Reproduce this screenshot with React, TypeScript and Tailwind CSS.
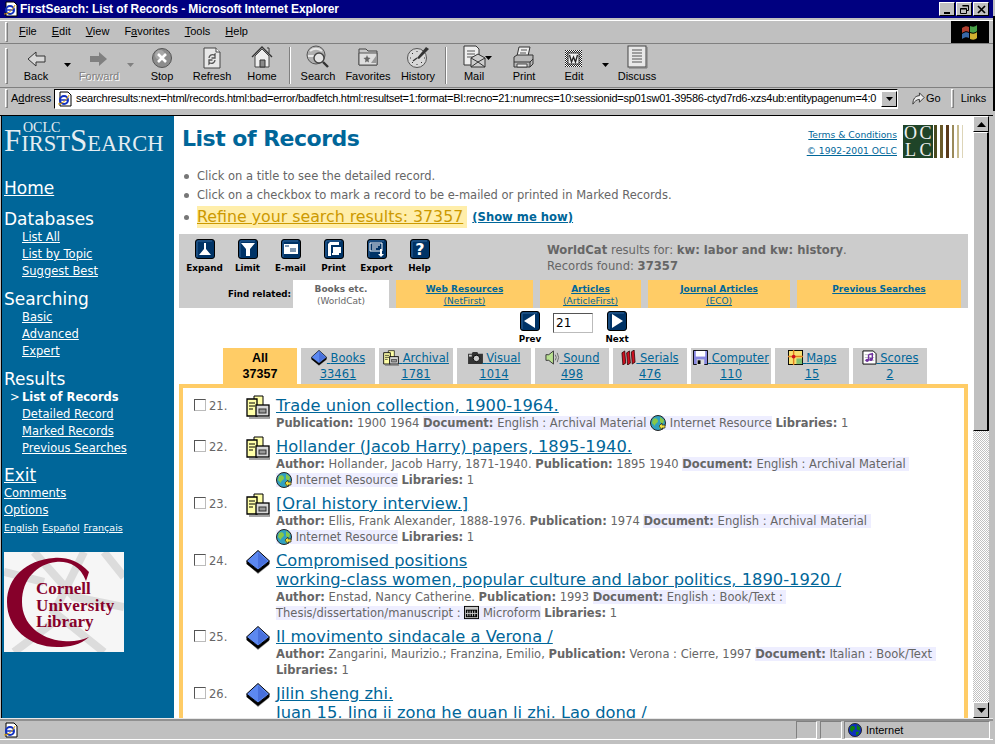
import type { ReactNode } from 'react';

const ui = "font-['Liberation_Sans',Arial,sans-serif]";
const page = "font-['DejaVu_Sans','Noto_Sans',sans-serif]";

// ---------- window chrome icons ----------
function IEPage({ className = '' }: { className?: string }) {
  return (
    <svg viewBox="0 0 16 16" width="16" height="16" className={className}>
      <path d="M3 1h8l3 3v11H3z" fill="#fff" stroke="#000" />
      <circle cx="7" cy="9" r="4" fill="none" stroke="#1030c0" strokeWidth="2" />
      <path d="M3 9h8" stroke="#1030c0" strokeWidth="1.5" />
      <path d="M1 13c4 0 9-4 11-9" fill="none" stroke="#e0a000" />
    </svg>
  );
}

function Grip({ h }: { h: number }) {
  return (
    <span
      className="block w-[3px] shrink-0 border-t border-l border-white border-r border-b border-r-[#808080] border-b-[#808080]"
      style={{ height: h }}
    />
  );
}

function Back() {
  return (
    <svg viewBox="0 0 20 20" width="20" height="20">
      <path d="M2 10l8-7v4h9v6h-9v4z" fill="#d8d8d8" stroke="#333" />
    </svg>
  );
}
function Forward() {
  return (
    <svg viewBox="0 0 20 20" width="20" height="20">
      <path d="M18 10l-8-7v4H1v6h9v4z" fill="#808080" />
    </svg>
  );
}
function Stop() {
  return (
    <svg viewBox="0 0 22 22" width="22" height="22">
      <circle cx="11" cy="11" r="9.5" fill="#8c8c8c" stroke="#555" />
      <circle cx="9" cy="8" r="5" fill="#a8a8a8" />
      <path d="M7 7l8 8M15 7l-8 8" stroke="#fff" strokeWidth="2.6" />
    </svg>
  );
}
function Refresh() {
  return (
    <svg viewBox="0 0 22 22" width="22" height="22">
      <path d="M3 1h12l4 4v16H3z" fill="#e8e8e8" stroke="#444" />
      <path d="M15 1v4h4" fill="#fff" stroke="#444" />
      <path d="M8 11a3.5 3.5 0 0 1 5-3l1-1v4h-3.5M14 13a3.5 3.5 0 0 1-5 3l-1 1v-4h3.5" fill="none" stroke="#555" strokeWidth="1.3" />
    </svg>
  );
}
function Home() {
  return (
    <svg viewBox="0 0 24 24" width="24" height="24">
      <path d="M2 12L12 2l10 10" fill="none" stroke="#333" strokeWidth="1.4" />
      <path d="M17 3h2v5" fill="#ddd" stroke="#333" />
      <path d="M5 11v11h14V11l-7-7z" fill="#eee" stroke="#444" />
      <path d="M10 15h5v7h-5z" fill="#8a8a8a" stroke="#333" />
    </svg>
  );
}
function SearchGlobe() {
  return (
    <svg viewBox="0 0 24 24" width="24" height="24">
      <circle cx="10" cy="10" r="9" fill="#b0b0b0" stroke="#555" />
      <path d="M4 6c4-3 8-3 12 0M2 11h6" stroke="#e8e8e8" strokeWidth="2" fill="none" />
      <circle cx="13" cy="13" r="5" fill="#e4e4e4" stroke="#444" strokeWidth="1.4" />
      <path d="M17 17l5 5" stroke="#333" strokeWidth="2.4" />
    </svg>
  );
}
function FavFolder() {
  return (
    <svg viewBox="0 0 24 24" width="24" height="24">
      <path d="M3 4h7l2 2h9v14H3z" fill="#c8c8c8" stroke="#444" />
      <path d="M3 8h18v12H3z" fill="#dedede" stroke="#555" />
      <path d="M11 10l1 2.5 2.5.5-2 1.8.5 2.7-2-1.3-2 1.3.5-2.7-2-1.8 2.5-.5z" fill="#666" />
      <path d="M15 18l5-7v7z" fill="#999" />
    </svg>
  );
}
function History() {
  return (
    <svg viewBox="0 0 24 24" width="24" height="24">
      <circle cx="11" cy="13" r="9.5" fill="#d8d8d8" stroke="#555" />
      <path d="M11 13l9-11 3 2-10 10z" fill="#333" />
      <path d="M11 6v1M4 13h1M18 13h1M11 19v1M6 8l1 1M6 18l1-1M16 18l-1-1" stroke="#333" />
      <path d="M11 13l-4 3" stroke="#333" strokeWidth="1.4" />
    </svg>
  );
}
function Mail() {
  return (
    <svg viewBox="0 0 24 24" width="24" height="24">
      <path d="M2 1h12l3 3v16H2z" fill="#eee" stroke="#333" />
      <path d="M5 6h8M5 9h8M5 12h6" stroke="#555" />
      <path d="M9 13l7-4 7 4v9H9z" fill="#ccc" stroke="#333" />
      <path d="M9 22l7-5 7 5M9 13l7 4 7-4" fill="none" stroke="#333" />
    </svg>
  );
}
function Printer() {
  return (
    <svg viewBox="0 0 24 24" width="24" height="24">
      <path d="M7 2h11l-2 9H5z" fill="#eee" stroke="#333" />
      <path d="M9 5h6M8 8h6" stroke="#555" />
      <path d="M2 12l3-2h16v9l-3 3H2z" fill="#b8b8b8" stroke="#333" />
      <path d="M2 17h16v5M18 17l3-3" fill="none" stroke="#333" />
      <path d="M5 19h10v3H5z" fill="#eee" stroke="#444" />
    </svg>
  );
}
function EditIcon() {
  return (
    <svg viewBox="0 0 20 20" width="20" height="20">
      <defs>
        <pattern id="chk" width="2" height="2" patternUnits="userSpaceOnUse">
          <rect width="2" height="2" fill="#fff" />
          <rect width="1" height="1" fill="#222" />
          <rect x="1" y="1" width="1" height="1" fill="#222" />
        </pattern>
      </defs>
      <rect x="1" y="1" width="17" height="17" fill="url(#chk)" />
      <rect x="4" y="4" width="11" height="11" fill="#eee" stroke="#333" />
      <path d="M5.5 6l2 7 2-5 2 5 2-7" fill="none" stroke="#222" strokeWidth="1.3" />
    </svg>
  );
}
function Discuss() {
  return (
    <svg viewBox="0 0 22 24" width="22" height="24">
      <rect x="2" y="1" width="18" height="21" fill="#e8e8e8" stroke="#444" />
      <path d="M6 5h10M6 8h10M6 11h10M6 14h10M6 17h10" stroke="#555" />
      <path d="M21 2v21H3" fill="none" stroke="#777" />
    </svg>
  );
}
function DropCaret({ color = '#000' }: { color?: string }) {
  return (
    <svg viewBox="0 0 7 4" width="7" height="4">
      <path d="M0 0h7L3.5 4z" fill={color} />
    </svg>
  );
}

function ToolButton({ icon, label, dim }: { icon: ReactNode; label: string; dim?: boolean }) {
  return (
    <div className="flex h-[43px] w-[50px] shrink-0 flex-col items-center">
      <div className="flex h-[25px] items-end justify-center">{icon}</div>
      <span className={`mt-[1px] text-[11px] leading-[13px] ${dim ? 'text-[#808080] [text-shadow:1px_1px_0_#fff]' : 'text-black'}`}>
        {label}
      </span>
    </div>
  );
}
function Drop({ dim }: { dim?: boolean }) {
  return (
    <div className="flex h-[43px] w-[13px] shrink-0 items-center justify-center pb-[2px]">
      <DropCaret color={dim ? '#808080' : '#000'} />
    </div>
  );
}
function ToolSep() {
  return (
    <div className="flex w-[6px] shrink-0 justify-center py-[3px]">
      <span className="h-[37px] w-[2px] border-r border-r-white bg-[#808080]" />
    </div>
  );
}

function CapButton({ children }: { children: ReactNode }) {
  return (
    <span className="flex h-[14px] w-[16px] items-center justify-center border border-t-white border-l-white border-r-black border-b-black bg-[#c0c0c0] text-black">
      {children}
    </span>
  );
}

function TitleBar() {
  return (
    <div className="flex h-[18px] shrink-0 items-center bg-[#000080] pr-[4px] pl-[3px]">
      <IEPage />
      <span className="ml-[1px] flex-1 text-[12px] font-bold tracking-[-0.1px] text-white">
        FirstSearch: List of Records - Microsoft Internet Explorer
      </span>
      <div className="flex items-center gap-[1px]">
        <CapButton>
          <svg viewBox="0 0 9 9" width="9" height="9"><path d="M1 7h6v2H1z" /></svg>
        </CapButton>
        <CapButton>
          <svg viewBox="0 0 9 9" width="9" height="9"><path d="M2.5.5h6v5h-2M.5 3.5h6v5h-6zM.5 4h6M2.5 1h6" fill="none" stroke="#000" /></svg>
        </CapButton>
        <CapButton>
          <svg viewBox="0 0 9 9" width="9" height="9"><path d="M1 1l7 7M8 1l-7 7" stroke="#000" strokeWidth="1.7" /></svg>
        </CapButton>
      </div>
    </div>
  );
}

function MenuBar() {
  const items: [string, string, string][] = [
    ['', 'F', 'ile'],
    ['', 'E', 'dit'],
    ['', 'V', 'iew'],
    ['F', 'a', 'vorites'],
    ['', 'T', 'ools'],
    ['', 'H', 'elp'],
  ];
  return (
    <div className="flex h-[24px] shrink-0 items-center border-t border-b border-t-white border-b-[#808080] pr-[4px] pl-[5px]">
      <Grip h={20} />
      <div className="ml-[11px] flex flex-1 gap-[15px] pb-[2px] text-[11px] text-black">
        {items.map(([a, b, c]) => (
          <span key={b + c}>
            {a}
            <span className="underline">{b}</span>
            {c}
          </span>
        ))}
      </div>
      <div className="flex h-[22px] w-[38px] items-center justify-center bg-black">
        <svg viewBox="0 0 18 18" width="18" height="18">
          <path d="M1 5c3-2 5-2 7-1v5c-2-1-4-1-7 1z" fill="#b04030" />
          <path d="M1 11c3-2 5-2 7-1v5c-2-1-4-1-7 1z" fill="#3868a8" />
          <path d="M9 3c3 1 5 1 7-1v6c-2 2-4 2-7 1z" fill="#48a048" />
          <path d="M9 10c3 1 5 1 7-1v6c-2 2-4 2-7 1z" fill="#d0b030" />
        </svg>
      </div>
    </div>
  );
}

function Toolbar() {
  return (
    <div className="flex h-[44px] shrink-0 items-center border-b border-b-[#808080] pl-[5px]">
      <Grip h={36} />
      <div className="ml-[3px] flex items-start">
        <ToolButton icon={<Back />} label="Back" />
        <Drop />
        <ToolButton icon={<Forward />} label="Forward" dim />
        <Drop dim />
        <ToolButton icon={<Stop />} label="Stop" />
        <ToolButton icon={<Refresh />} label="Refresh" />
        <ToolButton icon={<Home />} label="Home" />
        <ToolSep />
        <ToolButton icon={<SearchGlobe />} label="Search" />
        <ToolButton icon={<FavFolder />} label="Favorites" />
        <ToolButton icon={<History />} label="History" />
        <ToolSep />
        <div className="relative">
          <ToolButton icon={<Mail />} label="Mail" />
          <span className="absolute top-[12px] left-[36px] flex">
            <DropCaret />
          </span>
        </div>
        <ToolButton icon={<Printer />} label="Print" />
        <ToolButton icon={<EditIcon />} label="Edit" />
        <Drop />
        <ToolButton icon={<Discuss />} label="Discuss" />
      </div>
    </div>
  );
}

function AddressBar() {
  return (
    <div className="flex h-[21px] shrink-0 items-center pl-[5px] text-[11px] text-black">
      <Grip h={19} />
      <span className="ml-[3px] w-[43px]">
        A<span className="underline">d</span>dress
      </span>
      <div className="flex h-[20px] w-[844px] items-center border border-t-black border-l-black border-r-white border-b-white bg-white">
        <IEPage className="ml-[2px] shrink-0" />
        <span className="ml-[3px] flex-1 overflow-hidden tracking-[-0.26px] whitespace-nowrap">
          searchresults:next=html/records.html:bad=error/badfetch.html:resultset=1:format=BI:recno=21:numrecs=10:sessionid=sp01sw01-39586-ctyd7rd6-xzs4ub:entitypagenum=4:0
        </span>
        <span className="flex h-[16px] w-[16px] shrink-0 items-center justify-center border border-t-white border-l-white border-r-black border-b-black bg-[#c0c0c0]">
          <DropCaret />
        </span>
      </div>
      <svg viewBox="0 0 16 16" width="15" height="15" className="ml-[13px]">
        <path d="M2 14c0-6 3-9 7-9V2l5 5-5 5V9c-3 0-5 2-7 5z" fill="#eee" stroke="#333" />
      </svg>
      <span>Go</span>
      <span className="ml-[10px] flex">
        <Grip h={19} />
      </span>
      <span className="ml-[7px]">Links</span>
    </div>
  );
}

function StatusBar() {
  return (
    <div className="shrink-0">
      <div className="h-[1px] bg-[#e8e8e8]" />
      <div className="h-[2px] bg-[#909090]" />
      <div className="flex h-[19px] items-stretch border-b border-b-white pl-[2px] text-[11px] text-black">
        <div className="flex w-[791px] items-center">
          <IEPage className="ml-[1px]" />
        </div>
        <div className="ml-[3px] w-[21px] border border-t-[#808080] border-l-[#808080] border-r-white border-b-white" />
        <div className="ml-[3px] w-[22px] border border-t-[#808080] border-l-[#808080] border-r-white border-b-white" />
        <div className="ml-[2px] flex w-[146px] items-center border border-t-[#808080] border-l-[#808080] border-r-white border-b-white pl-[3px]">
          <SmallGlobe size={14} plain />
          <span className="ml-[4px]">Internet</span>
        </div>
      </div>
    </div>
  );
}

function ScrollBar() {
  return (
    <div className="flex w-[16px] shrink-0 flex-col bg-[#c0c0c0]">
      <ScrollButton up />
      <div className="h-[299px] shrink-0 border border-t-white border-l-white border-r-2 border-r-black border-b-black bg-[#c0c0c0]" />
      <div className="flex-1 bg-[repeating-conic-gradient(#fff_0%_25%,#c0c0c0_0%_50%)] bg-[length:2px_2px]" />
      <ScrollButton />
    </div>
  );
}
function ScrollButton({ up }: { up?: boolean }) {
  return (
    <div className="flex h-[16px] shrink-0 items-center justify-center border border-t-white border-l-white border-r-black border-b-black bg-[#c0c0c0]">
      <svg viewBox="0 0 9 5" width="9" height="5">
        <path d={up ? 'M4.5 0L9 5H0z' : 'M0 0h9L4.5 5z'} />
      </svg>
    </div>
  );
}

// ---------- sidebar ----------
function FirstSearchLogo() {
  return (
    <div className="relative h-[41px] font-['Liberation_Serif',serif] leading-none text-[#e4edf2]">
      <div className="absolute top-[5px] left-[19px] text-[14px]">OCLC</div>
      <div className="absolute top-[9px] left-0 text-[22.5px] whitespace-nowrap">
        <span className="text-[31px]">F</span>IRST<span className="text-[31px]">S</span>EARCH
      </div>
    </div>
  );
}

function NavHead({ children, link }: { children: ReactNode; link?: boolean }) {
  return <div className={`text-[17px] leading-[20px] ${link ? 'underline' : ''}`}>{children}</div>;
}
function NavLink({ children, bold }: { children: ReactNode; bold?: boolean }) {
  return (
    <div className="relative pl-[18px] text-[11.5px] leading-[17px]">
      {bold ? (
        <>
          <span className="absolute left-[6px]">&gt;</span>
          <b>{children}</b>
        </>
      ) : (
        <span className="underline">{children}</span>
      )}
    </div>
  );
}

function CornellLogo() {
  return (
    <svg viewBox="0 0 120 100" width="120" height="100" className="mt-[16px] block">
      <rect width="120" height="100" fill="#f6f6f6" />
      <path d="M30 0l40 45 50 10M80 0L50 60l50 40M0 20l40 10M10 100l40-30M100 0l20 25" stroke="#dcdcdc" strokeWidth="8" fill="none" />
      <path d="M85 20C75 9 62 5 50 6 22 8 3 26 3 50c0 26 22 45 50 45 13 0 23-2 32-10-9 4-17 5-26 4C36 87 18 72 18 50 18 27 33 12 52 10c12-1 24 3 30 19z" fill="#86002a" />
      <g fill="#86002a" fontFamily="'Liberation Serif', serif" fontWeight="bold" fontSize="17">
        <text x="32" y="42">Cornell</text>
        <text x="32" y="58.500" letterSpacing="0.3">University</text>
        <text x="32" y="75">Library</text>
      </g>
    </svg>
  );
}

function Sidebar() {
  return (
    <aside className={`h-full w-[172px] shrink-0 overflow-hidden bg-[#006699] pl-[2px] text-white ${page}`}>
      <FirstSearchLogo />
      <div className="mt-[21px]">
        <NavHead link>Home</NavHead>
      </div>
      <div className="mt-[11px]">
        <NavHead>Databases</NavHead>
        <NavLink>List All</NavLink>
        <NavLink>List by Topic</NavLink>
        <NavLink>Suggest Best</NavLink>
      </div>
      <div className="mt-[9px]">
        <NavHead>Searching</NavHead>
        <NavLink>Basic</NavLink>
        <NavLink>Advanced</NavLink>
        <NavLink>Expert</NavLink>
      </div>
      <div className="mt-[9px]">
        <NavHead>Results</NavHead>
        <NavLink bold>List of Records</NavLink>
        <NavLink>Detailed Record</NavLink>
        <NavLink>Marked Records</NavLink>
        <NavLink>Previous Searches</NavLink>
      </div>
      <div className="mt-[8px]">
        <NavHead link>Exit</NavHead>
      </div>
      <div className="text-[11.5px] leading-[17px] underline">Comments</div>
      <div className="text-[11.5px] leading-[17px] underline">Options</div>
      <div className="flex gap-[4px] text-[9.5px] leading-[17px] underline">
        <span>English</span>
        <span>Español</span>
        <span>Français</span>
      </div>
      <CornellLogo />
    </aside>
  );
}

// ---------- page icons ----------
function NavyButton({ children }: { children: ReactNode }) {
  return (
    <svg viewBox="0 0 20 20" width="20" height="20" className="block">
      <rect x="0.5" y="0.5" width="19" height="19" rx="2.5" fill="#003366" stroke="#000" />
      <path d="M2 18V3q0-1 1-1h14" fill="none" stroke="#336699" />
      {children}
    </svg>
  );
}
const navyGlyphs: Record<string, ReactNode> = {
  Expand: <path d="M9 4h2v6l5 6H4l5-6z" fill="#fff" />,
  Limit: <path d="M3 4h14l-5 6v7H8v-7z" fill="#fff" />,
  'E-mail': (
    <>
      <rect x="3" y="5" width="14" height="10" fill="#fff" />
      <path d="M4 7h4M9 10h6M9 12h6" stroke="#003366" />
    </>
  ),
  Print: (
    <>
      <path d="M4 17V5l2-2h9v3H7v11z" fill="#fff" />
      <path d="M9 8h8v6H9z" fill="#fff" />
      <path d="M8 14h7v2H8z" fill="#fff" />
    </>
  ),
  Export: (
    <>
      <path d="M3 4h12v8H3z" fill="none" stroke="#fff" />
      <path d="M5 6h8M5 8h6M5 10h4" stroke="#fff" />
      <path d="M13 10v5h-2l3 3 3-3h-2v-5z" fill="#fff" />
    </>
  ),
  Help: (
    <text x="10" y="16" textAnchor="middle" fontSize="16" fontWeight="bold" fill="#fff" fontFamily="'DejaVu Sans', sans-serif">
      ?
    </text>
  ),
  Prev: <path d="M4 10l11-7v14z" fill="#fff" />,
  Next: <path d="M16 10L5 3v14z" fill="#fff" />,
};

function SmallBook({ size = 16 }: { size?: number }) {
  return (
    <svg viewBox="0 0 24 24" width={size} height={size} className={size > 20 ? 'block' : 'inline-block align-[-4px]'}>
      <path d="M2 15l10 9 11-9-1-1-10 8-9-8z" fill="#999" />
      <path d="M0.5 11v3l11.5 9 11.5-9v-3l-11.5 9z" fill="#000" />
      <path d="M0.5 11L12 0.5 23.5 11 12 20z" fill="#5c88f0" stroke="#000" />
      <path d="M12 2.5l9.5 8.5-9.5 7.5z" fill="#4870dc" />
    </svg>
  );
}
function Archive({ size = 16 }: { size?: number }) {
  return (
    <svg viewBox="0 0 24 24" width={size} height={size} className={size > 20 ? 'block' : 'inline-block align-[-4px]'}>
      <path d="M8 1h9v16H8z" fill="#ffffa8" stroke="#000" />
      <path d="M1 4h10v17H1z" fill="#ffffa8" stroke="#000" strokeWidth="1.3" />
      <path d="M3 8h6M3 11h6M3 14h4" stroke="#000" />
      <rect x="10" y="10" width="13" height="11" fill="#d8d8d8" stroke="#000" strokeWidth="1.3" />
      <rect x="13" y="14" width="7" height="4" fill="#999" stroke="#333" />
      <path d="M3 23h21v-2" fill="none" stroke="#888" strokeWidth="1.5" />
    </svg>
  );
}
function SmallGlobe({ size = 16, plain }: { size?: number; plain?: boolean }) {
  return (
    <svg viewBox="0 0 16 16" width={size} height={size} className="inline-block align-[-4px]">
      <circle cx="8" cy="8" r="7.5" fill={plain ? '#1030c0' : '#30a0c0'} stroke="#222" />
      <path d="M3 4c3-2 5 0 5 2s-3 2-3 5L2 8zM10 2l4 3-1 4-3-2zM9 10l4 0-2 4-2-1z" fill={plain ? '#108010' : '#88c848'} />
      {!plain && <path d="M9 11l3-3v2h3v3h-3v2z" fill="#f0e040" stroke="#222" strokeWidth="0.7" />}
    </svg>
  );
}
function Microform() {
  return (
    <svg viewBox="0 0 16 16" width="15" height="15" className="inline-block align-[-3px]">
      <rect x="0.5" y="1.5" width="15" height="13" fill="#c8c8c8" stroke="#000" />
      <path d="M2 5h12v8H2z" fill="#000" />
      <path d="M4 6v6M6.5 6v6M9 6v6M11.5 6v6M2 9h12" stroke="#ccc" />
    </svg>
  );
}
const tabIcons: Record<string, ReactNode> = {
  Books: <SmallBook />,
  Archival: <Archive />,
  Visual: (
    <svg viewBox="0 0 16 14" width="15" height="13" className="inline-block align-[-2px]">
      <path d="M0 3h4l1-2h5l1 2h5v11H0z" fill="#333" />
      <circle cx="9" cy="8" r="3.5" fill="#ccc" stroke="#000" />
      <rect x="1" y="4" width="3" height="2" fill="#ccc" />
    </svg>
  ),
  Sound: (
    <svg viewBox="0 0 16 16" width="15" height="15" className="inline-block align-[-3px]">
      <path d="M1 5h3l5-4v14l-5-4H1z" fill="#b8e090" stroke="#333" />
      <path d="M11 5q2 3 0 6M13 3q3 5 0 10" stroke="#666" fill="none" />
    </svg>
  ),
  Serials: (
    <svg viewBox="0 0 16 16" width="15" height="15" className="inline-block align-[-3px]">
      <path d="M1 3l3-2 1 13-3 2zM6 3l3-2 1 13-3 2zM11 2l3-2 1 13-3 2z" fill="#d01020" stroke="#200" strokeWidth="0.8" />
    </svg>
  ),
  Computer: (
    <svg viewBox="0 0 16 16" width="15" height="15" className="inline-block align-[-3px]">
      <path d="M0.5 0.5h15v15h-15z" fill="#8888e0" stroke="#000" />
      <rect x="3" y="1" width="10" height="6" fill="#fff" />
      <rect x="4" y="10" width="8" height="6" fill="#ddd" />
      <rect x="5" y="11" width="3" height="4" fill="#000" />
    </svg>
  ),
  Maps: (
    <svg viewBox="0 0 16 16" width="15" height="15" className="inline-block align-[-3px]">
      <rect x="0.5" y="0.5" width="15" height="15" fill="#f8e070" stroke="#000" />
      <path d="M9 9h6v6H9z" fill="#80c070" />
      <path d="M0 7h16M6 0v16" stroke="#e08020" strokeWidth="1.5" />
      <circle cx="6" cy="7" r="2" fill="#d01020" />
    </svg>
  ),
  Scores: (
    <svg viewBox="0 0 16 16" width="15" height="15" className="inline-block align-[-3px]">
      <path d="M1 1h11l3 3v11H1z" fill="#fff" stroke="#000" />
      <path d="M3 5h10M3 8h10M3 11h10" stroke="#bbb" />
      <path d="M7 5l4-1v6M7 5v6" stroke="#7030a0" strokeWidth="1.5" fill="none" />
      <circle cx="5.5" cy="11" r="1.8" fill="#7030a0" />
      <circle cx="9.5" cy="10" r="1.8" fill="#7030a0" />
    </svg>
  ),
};

// ---------- page content ----------
function OclcMark() {
  return (
    <div className="flex h-[33px] w-[60px] font-['Liberation_Serif',serif]">
      <div className="grid w-[31px] grid-cols-2 bg-[#1f4428] text-center text-[18px] leading-[16px] text-[#eee]">
        <span>O</span>
        <span>C</span>
        <span>L</span>
        <span>C</span>
      </div>
      <div className="flex flex-1 gap-[3px] pl-[1px]">
        <span className="w-[3px] bg-[#4a4a1e]" />
        <span className="w-[3px] bg-[#6a5a2a]" />
        <span className="w-[3px] bg-[#5a3a1a]" />
        <span className="w-[2px] bg-[#9a8a5a]" />
        <span className="w-[2px] bg-[#c8bc90]" />
        <span className="w-[1px] bg-[#ddd5b8]" />
      </div>
    </div>
  );
}

function Header() {
  return (
    <div className="flex h-[50px] shrink-0 justify-between pr-[10px]">
      <h1 className="pt-[9px] pl-[8px] text-[22px] leading-[28px] font-bold tracking-[-0.5px] text-[#006699]">List of Records</h1>
      <div className="flex pt-[9px]">
        <div className="pt-[2px] text-right text-[9.2px] leading-[16px] text-[#006699] underline">
          <div>Terms &amp; Conditions</div>
          <div>© 1992-2001 OCLC</div>
        </div>
        <div className="ml-[6px]">
          <OclcMark />
        </div>
      </div>
    </div>
  );
}

function Bullets() {
  return (
    <ul className="h-[68px] shrink-0 pt-[1px] pl-[10px] text-[11.5px] leading-[19px] text-[#666666]">
      <li className="flex items-center">
        <span className="mr-[8px] h-[5px] w-[5px] rounded-full bg-[#777]" />
        Click on a title to see the detailed record.
      </li>
      <li className="flex items-center">
        <span className="mr-[8px] h-[5px] w-[5px] rounded-full bg-[#777]" />
        Click on a checkbox to mark a record to be e-mailed or printed in Marked Records.
      </li>
      <li className="mt-[1px] flex items-center leading-[22px]">
        <span className="mr-[8px] h-[5px] w-[5px] rounded-full bg-[#777]" />
        <span className="bg-[#ffeeaa] pr-[4px] text-[15.8px] text-[#cc9900] underline">Refine your search results: 37357</span>
        <span className="ml-[5px] text-[11.6px] font-bold text-[#006699] underline">(Show me how)</span>
      </li>
    </ul>
  );
}

const actions = ['Expand', 'Limit', 'E-mail', 'Print', 'Export', 'Help'];
const related = [
  { w: 137, top: 'Web Resources', sub: '(NetFirst)' },
  { w: 101, top: 'Articles', sub: '(ArticleFirst)' },
  { w: 142, top: 'Journal Articles', sub: '(ECO)' },
  { w: 164, top: 'Previous Searches', sub: '' },
];

function ActionPanel() {
  return (
    <div className="mr-[5px] ml-[5px] shrink-0 bg-[#cccccc]">
      <div className="flex h-[46px]">
        <div className="flex w-[368px] pt-[5px] pl-[4px]">
          {actions.map((a) => (
            <div key={a} className="flex w-[43px] flex-col items-center">
              <NavyButton>{navyGlyphs[a]}</NavyButton>
              <span className="mt-[3px] text-[8.8px] leading-[12px] font-bold text-black">{a}</span>
            </div>
          ))}
        </div>
        <div className="pt-[8px] text-[11.6px] leading-[16px] text-[#666666]">
          <div>
            <b>WorldCat</b> results for: <b>kw: labor and kw: history</b>.
          </div>
          <div>
            Records found: <b>37357</b>
          </div>
        </div>
      </div>
      <div className="flex h-[28px] text-[9px] leading-[12px]">
        <div className="flex w-[112px] items-center justify-end text-[8.7px] font-bold text-black">Find related:</div>
        <div className="ml-[2px] w-[96px] bg-white pt-[3px] text-center text-[#666666]">
          <div className="font-bold">Books etc.</div>
          <div>(WorldCat)</div>
        </div>
        {related.map((r) => (
          <div key={r.top} className="ml-[7px] bg-[#ffcc66] pt-[3px] text-center text-[#006699]" style={{ width: r.w }}>
            <div className="font-bold underline">{r.top}</div>
            <div className="underline">{r.sub}</div>
          </div>
        ))}
      </div>
    </div>
  );
}

function Pager() {
  return (
    <div className="flex h-[40px] shrink-0 pl-[336px]">
      <div className="flex w-[40px] flex-col items-center pt-[3px]">
        <NavyButton>{navyGlyphs.Prev}</NavyButton>
        <span className="mt-[2px] text-[8.8px] leading-[12px] font-bold text-black">Prev</span>
      </div>
      <div className="ml-[3px] pt-[5px]">
        <div className="flex h-[20px] w-[40px] items-center border border-t-[#555] border-l-[#555] border-r-[#bbb] border-b-[#bbb] pl-[2px] text-[12px] text-black">
          21
        </div>
      </div>
      <div className="ml-[4px] flex w-[40px] flex-col items-center pt-[3px]">
        <NavyButton>{navyGlyphs.Next}</NavyButton>
        <span className="mt-[2px] text-[8.8px] leading-[12px] font-bold text-black">Next</span>
      </div>
    </div>
  );
}

const formats = [
  { name: 'Books', n: '33461', w: 74 },
  { name: 'Archival', n: '1781', w: 74 },
  { name: 'Visual', n: '1014', w: 74 },
  { name: 'Sound', n: '498', w: 74 },
  { name: 'Serials', n: '476', w: 74 },
  { name: 'Computer', n: '110', w: 80 },
  { name: 'Maps', n: '15', w: 74 },
  { name: 'Scores', n: '2', w: 74 },
];

function FormatTabs() {
  return (
    <div className="flex h-[36px] shrink-0 gap-[4px] pl-[49px] text-[11.5px] leading-[16px]">
      <div className={`w-[74px] bg-[#ffcc66] pt-[2px] text-center text-[12.5px] font-bold text-black ${ui}`}>
        <div>All</div>
        <div>37357</div>
      </div>
      {formats.map((f) => (
        <div key={f.name} className="bg-[#cccccc] pt-[2px] text-center whitespace-nowrap text-[#006699]" style={{ width: f.w }}>
          <div className="h-[16px] underline">
            {tabIcons[f.name]} {f.name}
          </div>
          <div className="underline">{f.n}</div>
        </div>
      ))}
    </div>
  );
}

function L({ label, children }: { label: string; children?: ReactNode }) {
  return (
    <>
      <b>{label}</b> {children}{' '}
    </>
  );
}
function Doc({ children }: { children: ReactNode }) {
  return <span className="bg-[#eeeeff]">{children}</span>;
}
function Net() {
  return (
    <Doc>
      <SmallGlobe /> Internet Resource
    </Doc>
  );
}

type Rec = { no: number; icon: 'arch' | 'book'; title: string[]; lines: ReactNode[] };

const records: Rec[] = [
  {
    no: 21,
    icon: 'arch',
    title: ['Trade union collection, 1900-1964.'],
    lines: [
      <>
        <L label="Publication:">1900 1964</L>
        <Doc>
          <b>Document:</b> English : Archival Material <SmallGlobe /> Internet Resource
        </Doc>{' '}
        <L label="Libraries:">1</L>
      </>,
    ],
  },
  {
    no: 22,
    icon: 'arch',
    title: ['Hollander (Jacob Harry) papers, 1895-1940.'],
    lines: [
      <>
        <L label="Author:">Hollander, Jacob Harry, 1871-1940.</L>
        <L label="Publication:">1895 1940</L>
        <Doc>
          <b>Document:</b> English : Archival Material&nbsp;
        </Doc>
      </>,
      <>
        <Net /> <L label="Libraries:">1</L>
      </>,
    ],
  },
  {
    no: 23,
    icon: 'arch',
    title: ['[Oral history interview.]'],
    lines: [
      <>
        <L label="Author:">Ellis, Frank Alexander, 1888-1976.</L>
        <L label="Publication:">1974</L>
        <Doc>
          <b>Document:</b> English : Archival Material&nbsp;
        </Doc>
      </>,
      <>
        <Net /> <L label="Libraries:">1</L>
      </>,
    ],
  },
  {
    no: 24,
    icon: 'book',
    title: ['Compromised positions', 'working-class women, popular culture and labor politics, 1890-1920 /'],
    lines: [
      <>
        <L label="Author:">Enstad, Nancy Catherine.</L>
        <L label="Publication:">1993</L>
        <Doc>
          <b>Document:</b> English : Book/Text :&nbsp;
        </Doc>
      </>,
      <>
        <Doc>
          Thesis/dissertation/manuscript : <Microform /> Microform
        </Doc>{' '}
        <L label="Libraries:">1</L>
      </>,
    ],
  },
  {
    no: 25,
    icon: 'book',
    title: ['Il movimento sindacale a Verona /'],
    lines: [
      <>
        <L label="Author:">Zangarini, Maurizio.; Franzina, Emilio,</L>
        <L label="Publication:">Verona : Cierre, 1997</L>
        <Doc>
          <b>Document:</b> Italian : Book/Text&nbsp;
        </Doc>
      </>,
      <L label="Libraries:">1</L>,
    ],
  },
  {
    no: 26,
    icon: 'book',
    title: ['Jilin sheng zhi.', 'Juan 15, Jing ji zong he guan li zhi, Lao dong /'],
    lines: [],
  },
];

function Record({ r }: { r: Rec }) {
  return (
    <div className="flex">
      <div className="flex w-[52px] shrink-0 items-start pt-[3px] text-[11.5px] leading-[14px] text-[#666666]">
        <span className="h-[12px] w-[12px] border border-t-[#555] border-l-[#555] border-r-[#bbb] border-b-[#bbb] bg-white" />
        <span className="ml-[3px]">{r.no}.</span>
      </div>
      <div className="-mt-[1px] w-[30px] shrink-0">{r.icon === 'arch' ? <Archive size={24} /> : <SmallBook size={24} />}</div>
      <div className="whitespace-nowrap">
        {r.title.map((t) => (
          <div key={t} className="text-[16.3px] leading-[19px] text-[#006699] underline">
            {t}
          </div>
        ))}
        {r.lines.map((line, i) => (
          <div key={i} className="h-[16px] text-[11.5px] leading-[16px] text-[#666666] [&_b]:font-bold">
            {line}
          </div>
        ))}
      </div>
    </div>
  );
}

function ResultsBox() {
  return (
    <div className="mr-[5px] ml-[5px] flex-1 border-4 border-b-0 border-[#ffcc66] pt-[8px] pl-[11px]">
      <div className="flex flex-col gap-[6px]">
        {records.map((r) => (
          <Record key={r.no} r={r} />
        ))}
      </div>
    </div>
  );
}

export default function App() {
  return (
    <div className={`flex h-[744px] w-[995px] overflow-hidden bg-[#c0c0c0] ${ui}`}>
      <div className="flex h-[740px] w-[993px] shrink-0 flex-col">
        <TitleBar />
        <div className="h-[2px] shrink-0" />
        <MenuBar />
        <Toolbar />
        <AddressBar />
        <div className="h-[6px] shrink-0" />
        <div className="flex min-h-0 flex-1 border-t border-t-black pl-[1px]">
          <div className="flex min-h-0 flex-1 border-l border-l-black">
            <Sidebar />
            <main className={`flex h-full min-w-0 flex-1 flex-col overflow-hidden bg-white ${page}`}>
              <Header />
              <Bullets />
              <ActionPanel />
              <Pager />
              <FormatTabs />
              <ResultsBox />
            </main>
            <ScrollBar />
            <div className="w-[4px] shrink-0" />
          </div>
        </div>
        <StatusBar />
      </div>
      <div className="flex w-[2px] shrink-0 flex-col">
        <div className="h-[16px] shrink-0" />
        <div className="h-[95px] shrink-0 bg-black" />
      </div>
    </div>
  );
}
